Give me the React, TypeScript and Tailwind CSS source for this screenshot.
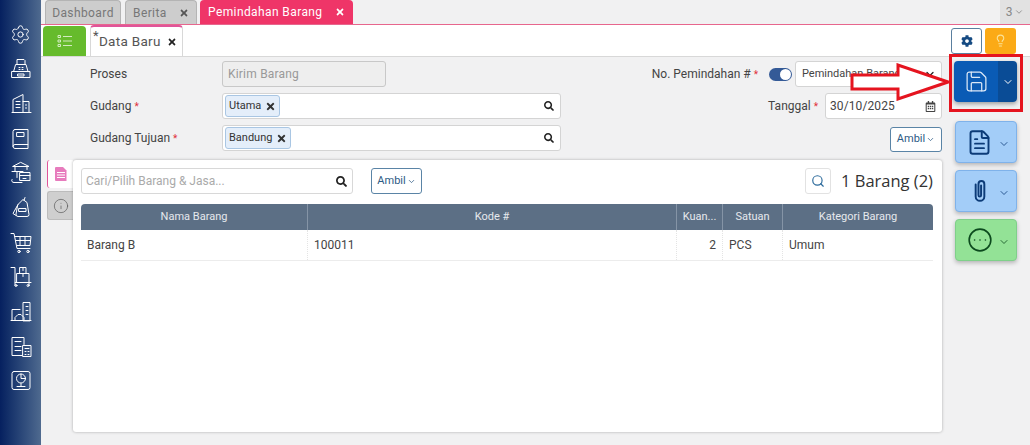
import React from "react";
import { ChevronDown, Settings, Save, FileText, CircleEllipsis, Search, Info, Lightbulb } from "lucide-react";
import { FaCog, FaSearch, FaTimes, FaRegCalendarAlt } from "react-icons/fa";

const Svg = ({ children }: { children: React.ReactNode }) => (
  <svg width="25" height="25" viewBox="0 0 24 24" fill="none" stroke="currentColor" strokeWidth="1" strokeLinejoin="round" strokeLinecap="round">
    {children}
  </svg>
);

const side: React.ReactNode[] = [
  <Settings key="0" size={21} strokeWidth={1.1} />,
  <Svg key="1"><path d="M8 8V3h7l1 1v4M7 8h10l2 7H5zM3 15h18v6H3zM9 17.500h6v2H9zM10 11h1M13 11h1M10 13h1M13 13h1" /></Svg>,
  <Svg key="2"><path d="M3 21h19M4 21V8l10-5v18M14 10h6v11M7 10h4M7 13h4M7 16h4M17 13v1M17 16v1" /></Svg>,
  <Svg key="3"><path d="M6 3h13v15H6a2 2 0 0 0-2 2V5a2 2 0 0 1 2-2zM4 20a2 2 0 0 0 2 2h13v-4M8 6h7v4H8z" /></Svg>,
  <Svg key="4"><path d="M12 2l8 4H4zM6 6v5M18 6v3M3 11h11M8 11v6M5 22h8M3 19a2 2 0 0 0 2 3M11 12h10v8H11zM11 15h10M14 18h3" /></Svg>,
  <Svg key="5"><path d="M9 9l5-5 4 3 2 12a2 2 0 0 1-2 2H9a2 2 0 0 1-2-2zM9 9l-5 9 3 2M15 5l1-3M10 13h7v3h-7z" /></Svg>,
  <Svg key="6"><path d="M2 3h3l3 15h13M6 6h16l-1 9H8M7 10h14M11 6v9M16 6v9" /><circle cx="10" cy="21" r="1.200" /><circle cx="19" cy="21" r="1.200" /></Svg>,
  <Svg key="7"><path d="M2 3h4v15h16M6 18v3M20 18v3M11 3h6v6h-6zM8 9h12v9H8zM14 3v3M14 9v3" /><circle cx="7" cy="21" r="1" /><circle cx="19" cy="21" r="1" /></Svg>,
  <Svg key="8"><path d="M3 21V10h8M14 21V3h7v18zM2 21h20M6 21v-3l3-3h3l3 3v3M17 7h2M17 11h2M17 15h2" /></Svg>,
  <Svg key="9"><path d="M15 10V3H3v18h10M6 7h6M6 12h6M6 16h6M14 11h8v11h-8zM16 14h4M16 17h1M19 17h1M16 20h1M19 20h1" /></Svg>,
  <Svg key="10"><path d="M5 3h14a2 2 0 0 1 2 2v14a2 2 0 0 1-2 2H5a2 2 0 0 1-2-2V5a2 2 0 0 1 2-2zM8 18h8M12 15v3" /><circle cx="12" cy="10" r="4.500" /><path d="M12 5.500V10h4.500" /></Svg>,
];

const Chip = ({ label }: { label: string }) => (
  <span className="flex h-[22px] items-center gap-[4px] rounded-[3px] border border-[#a9c6e3] bg-[#e4eefa] px-[3px] text-[11px] text-[#333]">
    {label}
    <FaTimes size={11} className="text-[#333]" />
  </span>
);

const Asterisk = () => <span className="ml-[3px] text-[10px] text-[#e0303a]">*</span>;

const SideButton = ({ icon, green }: { icon: React.ReactNode; green?: boolean }) => (
  <button className={`ml-[1px] flex h-[42px] w-[62px] items-center justify-end gap-[5px] rounded-[4px] border pr-[6px] shadow-[0_2px_4px_rgba(0,0,0,0.25)] ${green ? "border-[#7fd08a] bg-[#93e296] text-[#0c4a1e]" : "border-[#7fb2ea] bg-[#a3cdf8] text-[#0c3b78]"}`}>
    {icon}
    <ChevronDown size={12} strokeWidth={1.6} className="mt-[4px]" />
  </button>
);

const Th = ({ w, children }: { w: string; children: React.ReactNode }) => (
  <div className={`flex items-center justify-center border-r border-[#8594a6] last:border-r-0 ${w}`}>{children}</div>
);
const Td = ({ w, right, children }: { w: string; right?: boolean; children: React.ReactNode }) => (
  <div className={`flex items-center border-r border-dotted border-[#e4e4e4] px-[6px] last:border-r-0 ${right ? "justify-end" : ""} ${w}`}>{children}</div>
);

export default function App() {
  return (
    <div className="relative flex h-[445px] w-[1030px] overflow-hidden bg-[#f1f1f2] text-[12px] text-[#444]" style={{ fontFamily: 'Roboto, sans-serif' }}>
      <aside className="flex w-[41px] shrink-0 flex-col items-center gap-[10.700px] bg-gradient-to-r from-[#06205f] to-[#4f6a8f] pt-[22px] text-white">
        {side.map((icon, i) => (
          <div key={i} className="flex h-[24px] w-[24px] items-center justify-center">{icon}</div>
        ))}
      </aside>
      <div className="flex min-w-0 flex-1 flex-col">
        <div className="flex h-[25px] shrink-0 items-end border-b border-[#e7668d] pl-[4px]">
          <div className="mr-[4px] flex h-[24px] w-[76px] items-center justify-center rounded-t-[4px] border border-b-0 border-[#b4b4b4] bg-[#cdcdcd] tracking-[0.4px] text-[#777]">Dashboard</div>
          <div className="mr-[3px] flex h-[24px] w-[72px] items-center justify-between rounded-t-[4px] border border-b-0 border-[#b4b4b4] bg-[#cdcdcd] pl-[7px] pr-[7px] tracking-[0.4px] text-[#777]">Berita<FaTimes size={10} className="text-[#555]" /></div>
          <div className="flex h-[24px] w-[153px] items-center justify-between rounded-t-[4px] bg-[#ef3568] pl-[8px] pr-[8px] tracking-[0.4px] text-white">Pemindahan Barang<FaTimes size={10} /></div>
          <div className="ml-auto flex h-[24px] w-[30px] items-center justify-center gap-[2px] bg-[#e2e2e2] text-[#888]">3<ChevronDown size={10} /></div>
        </div>
        <div className="flex h-[32px] shrink-0 items-end border-b border-[#d8d8d8] bg-white pl-[2px] pr-[14px]">
          <div className="flex h-[30px] w-[43px] items-center justify-center rounded-t-[4px] bg-[#66bb2c] text-[#dff0d0]">
            <svg width="16" height="14" viewBox="0 0 16 14" fill="none" stroke="currentColor" strokeWidth="0.900">
              <path d="M1 1.500h2.500v2H1zM1 6h2.500v2H1zM1 10.500h2.500v2H1zM6 2.500h9M6 7h9M6 11.500h9" />
            </svg>
          </div>
          <div className="ml-[4px] flex h-[31px] w-[93px] items-center rounded-t-[4px] border-x border-t-2 border-[#d8d8d8] border-t-[#e0559a] bg-white pl-[2px] text-[13.500px] tracking-[0.3px] text-[#555]">
            <span className="relative -top-[6px] text-[13px]">*</span>
            <span>Data Baru</span>
            <FaTimes size={10} className="ml-[6px] text-[#222]" />
          </div>
          <div className="ml-auto flex items-center gap-[3px] self-center">
            <button className="flex h-[26px] w-[31px] items-center justify-center rounded-[3px] border border-[#5a7f9f] bg-white text-[#154a82]"><FaCog size={12} /></button>
            <button className="flex h-[26px] w-[31px] items-center justify-center rounded-[3px] bg-[#fbaa16] text-[#fbe39a]"><Lightbulb size={13} /></button>
          </div>
        </div>
        <div className="flex min-h-0 flex-1">
          <div className="flex min-w-0 flex-1 flex-col">
            <div className="flex h-[103px] shrink-0 pl-[49px] pt-[4px]">
              <div className="flex w-[471px] flex-col gap-[6px]">
                <div className="flex h-[26px] items-center">
                  <span className="w-[132px]">Proses</span>
                  <div className="flex h-[26px] w-[164px] items-center rounded-[3px] border border-[#c8c8c8] bg-[#eeeeee] px-[5px] tracking-[0.2px] text-[#999]">Kirim Barang</div>
                </div>
                {["Utama", "Bandung"].map((v, i) => (
                  <div key={v} className="flex h-[26px] items-center">
                    <span className="w-[132px]">{i ? "Gudang Tujuan" : "Gudang"}<Asterisk /></span>
                    <div className="flex h-[26px] w-[339px] items-center justify-between rounded-[3px] border border-[#d4d4d4] bg-white pl-[2px] pr-[6px]">
                      <Chip label={v} />
                      <FaSearch size={10} className="text-[#222]" />
                    </div>
                  </div>
                ))}
              </div>
              <div className="flex flex-1 flex-col items-end gap-[6px] pr-[12px]">
                <div className="flex h-[26px] items-center">
                  <span>No. Pemindahan #<Asterisk /></span>
                  <span className="ml-[11px] flex h-[13px] w-[23px] items-center justify-end rounded-full bg-[#345a97] pr-[1px]"><span className="h-[11px] w-[11px] rounded-full bg-white" /></span>
                  <div className="ml-[3px] flex h-[26px] w-[147px] items-center justify-between rounded-[3px] border border-[#d4d4d4] bg-white pl-[6px] pr-[5px] text-[11px]">
                    Pemindahan Barang
                    <ChevronDown size={12} strokeWidth={2.500} className="text-[#222]" />
                  </div>
                </div>
                <div className="flex h-[26px] items-center">
                  <span>Tanggal<Asterisk /></span>
                  <div className="ml-[7px] flex h-[26px] w-[117px] items-center justify-between rounded-[3px] border border-[#d4d4d4] bg-white pl-[4px] pr-[5px] tracking-[0.1px]">
                    30/10/2025
                    <FaRegCalendarAlt size={11} className="text-[#444]" />
                  </div>
                </div>
                <button className="mt-[2px] flex h-[25px] w-[52px] items-center justify-center gap-[1px] rounded-[3px] border border-[#5a84a6] bg-white text-[11px] text-[#2d5b85]">Ambil<ChevronDown size={9} /></button>
              </div>
            </div>
            <div className="flex min-h-0 flex-1 pb-[13px] pl-[6px] pr-[12px]">
              <div className="flex w-[26px] shrink-0 flex-col gap-[3px]">
                <div className="flex h-[28px] items-center justify-center rounded-l-[3px] border-l border-[#e0559a] bg-white text-[#d94fa6]">
                  <svg width="14" height="14" viewBox="0 0 14 14"><path d="M2 0h7l3.500 3.500V14H2a1 1 0 0 1-1-1V1a1 1 0 0 1 1-1z" fill="#e77cbd" /><path d="M3 5.500h8M3 8h8M3 10.500h8" stroke="#fff" strokeWidth="1" /></svg>
                </div>
                <div className="flex h-[29px] items-center justify-center rounded-l-[3px] border border-r-0 border-[#bcbcbc] bg-[#cfcfcf] text-[#555]"><Info size={16} strokeWidth={1} /></div>
              </div>
              <div className="min-w-0 flex-1 rounded-[3px] bg-white pl-[8px] pr-[9px] pt-[8px] shadow-[0_0_3px_rgba(0,0,0,0.3)]">
                <div className="flex h-[26px] items-center">
                  <div className="flex h-[26px] w-[272px] items-center justify-between rounded-[3px] border border-[#d8d8d8] pl-[4px] pr-[5px] text-[#aaa]">
                    Cari/Pilih Barang & Jasa...
                    <FaSearch size={11} className="text-[#222]" />
                  </div>
                  <button className="ml-[18px] flex h-[26px] w-[51px] items-center justify-center gap-[1px] rounded-[3px] border border-[#5a84a6] text-[11px] text-[#2d5b85]">Ambil<ChevronDown size={9} /></button>
                  <button className="ml-auto flex h-[26px] w-[26px] items-center justify-center rounded-[3px] border border-[#e2e2e2] text-[#2d6b9c]"><Search size={14} strokeWidth={2} /></button>
                  <span className="ml-[10px] text-[16.500px] text-[#333]" style={{ fontFamily: '"Open Sans", sans-serif' }}>1 Barang (2)</span>
                </div>
                <div className="mt-[10px] overflow-hidden rounded-t-[4px] text-[11px] text-[#e6e9ed]">
                  <div className="flex h-[26px] bg-[#5c6f85]">
                    <Th w="w-[227px]">Nama Barang</Th>
                    <Th w="w-[369px]">Kode #</Th>
                    <Th w="w-[46px]">Kuan...</Th>
                    <Th w="w-[60px]">Satuan</Th>
                    <Th w="flex-1">Kategori Barang</Th>
                  </div>
                  <div className="flex h-[31px] border-b border-[#ececec] text-[12px] text-[#444]">
                    <Td w="w-[227px]">Barang B</Td>
                    <Td w="w-[369px]">100011</Td>
                    <Td w="w-[46px]" right>2</Td>
                    <Td w="w-[60px]">PCS</Td>
                    <Td w="flex-1">Umum</Td>
                  </div>
                </div>
              </div>
            </div>
          </div>
          <div className="flex w-[76px] shrink-0 flex-col gap-[7px] pt-[4px]">
            <div className="mb-[12px] flex h-[41px] w-[63px] overflow-hidden rounded-[4px] shadow-[0_2px_4px_rgba(0,0,0,0.35)]">
              <div className="flex w-[44px] items-center justify-center bg-[#0a5bb5] text-[#dbe8f7]"><Save size={25} strokeWidth={1.200} /></div>
              <div className="flex flex-1 items-center justify-center bg-[#0a4c96] text-white"><ChevronDown size={12} strokeWidth={2} /></div>
            </div>
            <SideButton icon={<FileText size={27} strokeWidth={1.700} />} />
            <SideButton icon={<svg width="26" height="26" viewBox="0 0 24 24" fill="none" stroke="currentColor" strokeWidth="1.800" strokeLinecap="round"><path d="M8 6v11a4 4 0 0 0 8 0V5.500a2.700 2.700 0 0 0-5.400 0V16a1.200 1.200 0 0 0 2.400 0V7" /></svg>} />
            <SideButton green icon={<CircleEllipsis size={26} strokeWidth={1.500} />} />
          </div>
        </div>
      </div>
      <div className="pointer-events-none absolute left-[949px] top-[54px] h-[58px] w-[74px] border-[3px] border-[#e5141f]" />
      <svg className="pointer-events-none absolute left-[850px] top-[63px]" width="100" height="38" viewBox="0 0 100 38">
        <path d="M2 12H48V2L98 19 48 36V26H2Z" fill="#fff" stroke="#e5141f" strokeWidth="3" strokeLinejoin="miter" />
      </svg>
    </div>
  );
}
